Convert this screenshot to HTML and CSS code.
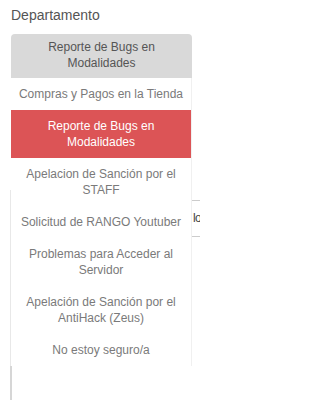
FILE: index.html
```html
<!DOCTYPE html>
<html lang="es">
<head>
<meta charset="utf-8">
<title>Departamento</title>
<link rel="stylesheet" href="styles.css">
</head>
<body>
<div class="page">
  <div class="field">
    <div class="label">Departamento</div>
    <div class="select">
      <div class="toggle">Reporte de Bugs en Modalidades</div>
      <ul class="menu">
        <li class="item">Compras y Pagos en la Tienda</li>
        <li class="item active">Reporte de Bugs en Modalidades</li>
        <li class="item">Apelacion de Sanción por el STAFF</li>
        <li class="item">Solicitud de RANGO Youtuber</li>
        <li class="item">Problemas para Acceder al Servidor</li>
        <li class="item">Apelación de Sanción por el AntiHack (Zeus)</li>
        <li class="item">No estoy seguro/a</li>
      </ul>
    </div>
    <div class="behind">
      <div class="input">lo</div>
    </div>
    <div class="textarea-edge"></div>
  </div>
</div>
</body>
</html>
```

FILE: styles.css
```css
html, body {
  margin: 0;
  padding: 0;
  background: #ffffff;
}

.page {
  width: 200px;
  height: 400px;
  overflow: hidden;
  font-family: "Liberation Sans", Arial, sans-serif;
}

.field {
  display: flex;
  flex-direction: column;
}

.label {
  margin-left: 11px;
  padding-top: 5px;
  font-size: 14px;
  line-height: 20px;
  color: #555555;
}

.select {
  position: relative;
  margin-top: 9px;
  margin-left: 11px;
  width: 181px;
}

.toggle {
  box-sizing: border-box;
  height: 44px;
  padding: 5px 8px 7px;
  background: #d9d9d9;
  border-radius: 4px 4px 0 0;
  font-size: 12px;
  line-height: 16px;
  text-align: center;
  color: #555555;
}

.menu {
  position: absolute;
  top: 44px;
  left: 0;
  z-index: 2;
  width: 180px;
  margin: 0;
  padding: 0;
  list-style: none;
  background: #ffffff;
  border-right: 1px solid #f0f0f0;
}

.item {
  padding: 8px 3px;
  font-size: 12px;
  line-height: 16px;
  text-align: center;
  color: #7a7a7a;
}

.item.active {
  background: #dc5456;
  color: #ffffff;
}

.behind {
  margin-top: 112px;
  margin-left: 10px;
  height: 176px;
  border-left: 1px solid #e8e8e8;
  padding-top: 10px;
  box-sizing: border-box;
}

.input {
  box-sizing: border-box;
  margin-left: 181px;
  width: 9px;
  height: 37px;
  border-top: 1px solid #cccccc;
  border-bottom: 1px solid #cccccc;
  padding-left: 1px;
  white-space: nowrap;
  font-size: 12px;
  letter-spacing: -0.6px;
  line-height: 35px;
  color: #444444;
}

.textarea-edge {
  margin-left: 10px;
  height: 40px;
  border-left: 2px solid #d6d6d6;
}
```
